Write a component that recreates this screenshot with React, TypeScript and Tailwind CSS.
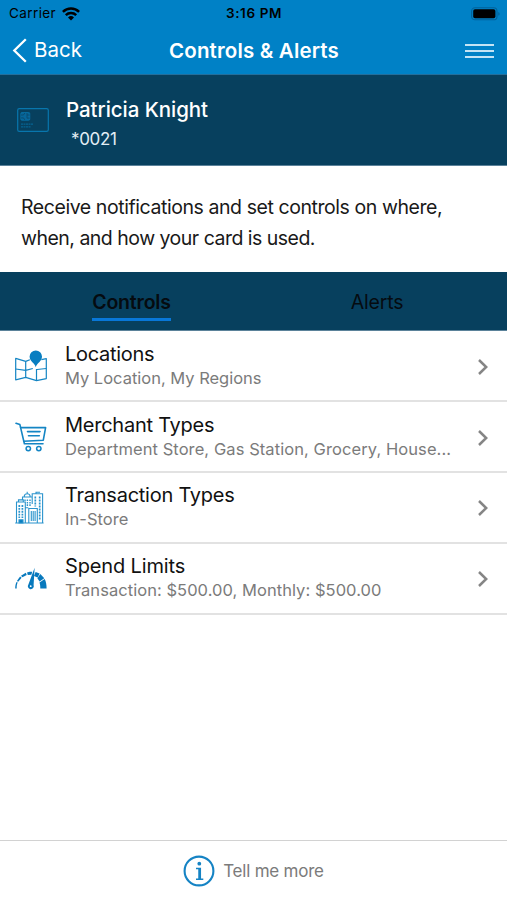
import type { ReactNode } from "react";

type ControlItem = {
  title: string;
  titleClass: string;
  detail: string;
  detailClass: string;
  icon: ReactNode;
};

function WifiIcon() {
  return (
    <svg width="18" height="14" viewBox="0 0 18 14" fill="none" stroke="#000" strokeWidth="2.5">
      <path d="M0.9 4.8a11.7 11.7 0 0 1 16.2 0" />
      <path d="M3.8 8.1a7.5 7.5 0 0 1 10.4 0" />
      <path d="M9 13.4 6 10.5a4.3 4.3 0 0 1 6 0z" fill="#000" stroke="none" />
    </svg>
  );
}

function BatteryIcon() {
  return (
    <svg width="30" height="14" viewBox="0 0 30 14">
      <rect x="0.6" y="0.8" width="25.4" height="12" rx="3.4" fill="none" stroke="#00629a" strokeWidth="1.1" />
      <rect x="2.2" y="2.3" width="22.2" height="9" rx="1.8" fill="#000" />
      <path d="M27.3 4.9v3.8c1.8-.6 1.8-3.2 0-3.8z" fill="#00629a" />
    </svg>
  );
}

function CardIcon() {
  return (
    <svg width="32" height="24" viewBox="0 0 32 24" fill="none" stroke="#0876ad">
      <rect x="0.7" y="0.7" width="30.6" height="22.6" rx="1.6" strokeWidth="1.2" />
      <rect x="3.8" y="4.5" width="9" height="7.8" rx="1.2" fill="#07669a" strokeWidth="0.7" />
      <path d="M4 7h2.5l1.3-2M4 9.9h2.5l1.3 2M12.6 7H10v3.1h2.6M10 7V5" stroke="#0b4668" strokeWidth="0.8" />
      <path d="M4 16.2h12M4 18.9h9.5" strokeWidth="1.2" strokeDasharray="2 .5" opacity=".65" />
    </svg>
  );
}

function MapIcon() {
  return (
    <svg width="34" height="34" viewBox="0 0 34 34" fill="none" stroke="#1485c4" strokeWidth="1.2" strokeLinejoin="round">
      <path d="m15.9 10.8-4.2 1.6-10-3v21.4l10-2.4 10.8 3.2 9.8-2V9.6l-4.9 1" />
      <path d="M11.7 12.6v15.8M22.5 20v11.6M1.7 20l10 1.3 7.1-1.8M23 20.5l9.3-1" />
      <path d="M21.8 18.3c-.9-4-6.2-5.8-6.2-10.7a6.2 6.2 0 0 1 12.4 0c0 4.9-5.3 6.7-6.2 10.7z" fill="#087ec1" stroke="none" />
    </svg>
  );
}

function CartIcon() {
  return (
    <svg width="34" height="34" viewBox="0 0 34 34" fill="none" stroke="#1485c4" strokeWidth="1.6" strokeLinecap="round" strokeLinejoin="round">
      <path d="M2 3.2 5.9 4.6l4.5 19.1H29" />
      <path d="M6.6 7.6h25l-2.3 12.6-19.6 1" />
      <path d="M13.5 11.6H26M14.5 15.8h10.8" />
      <circle cx="14.3" cy="28.6" r="2.2" strokeWidth="1.5" />
      <circle cx="24.8" cy="28.6" r="2.2" strokeWidth="1.5" />
    </svg>
  );
}

function BuildingsIcon() {
  return (
    <svg width="34" height="34" viewBox="0 0 34 34" fill="none" stroke="#2b94cd" strokeWidth="1.1">
      <path d="M2.5 32V11h8.8v21M4.5 10.8V8.9h4.8v1.9M8.5 8.6V6h9.8M10.2 5.8a3 3 0 0 1 6 0M13.2 2.8V.8M18.2 13V2.7h10.4V32M22 2.5V1.3h4M11.3 16.7h3M14.8 32V17.5h8.5V32M1.2 32h28.4" />
      <path d="M5.3 14v13M8.4 14v13" strokeWidth="1.7" strokeDasharray="1.9 1" />
      <path d="M11 8.5v1.5M13.4 8.5v7M16 8.5v7" strokeWidth="1.4" strokeDasharray="1.6 .8" />
      <path d="M21.3 5.5v10M25.7 5.5v24" strokeWidth="1.7" strokeDasharray="1.9 1.1" />
      <path d="M17.3 20v10M19.2 20v10M21.1 20v10" strokeWidth="1.1" />
      <path d="M5 32v-3.2h4V32z" fill="#087ec1" />
    </svg>
  );
}

function GaugeIcon() {
  return (
    <svg width="34" height="34" viewBox="0 0 34 34" fill="#0879bd">
      <path d="M1.2 26.4c0-2.5.4-4.4 1.3-6.4l1.2.6c-.8 1.8-1.1 3.6-1 5.8z" />
      <path d="m2.9 18.9 3.2-4.4 1.5 1.3-3.4 4z" />
      <path d="m7 13.7 4.8-2.9.9 2.2-4.3 2.3z" />
      <path d="M13 10.4c1.9-.6 3.6-.7 5.2-.7l-.8 3-3.6.2z" />
      <path d="m21.6 9.9 4 1.6-2 4.1-3.6-1.5z" />
      <path d="m26.3 12 4 4.2-4.7 3.2-2.2-3.1z" />
      <path d="M30.7 17c1.3 2.6 1.9 5.8 1.9 9.4h-6.3c0-2.4-.2-3.8-.8-5.8z" />
      <path d="m20.6 5.8-6.2 16.6a3 3 0 1 0 5.2.7z" />
      <circle cx="16.7" cy="24.2" r="0.9" fill="#fff" />
    </svg>
  );
}

function InfoIcon() {
  return (
    <svg width="32" height="32" viewBox="0 0 32 32" fill="none" stroke="#1583c4">
      <circle cx="16" cy="16" r="14.4" strokeWidth="2.1" />
      <circle cx="16.3" cy="8.7" r="1.9" fill="#1583c4" stroke="none" />
      <path d="M13 13.4h4.3v10.8M13 24.3h7.3" strokeWidth="1.5" />
      <path d="M16.6 13v11.5" strokeWidth="2.7" />
    </svg>
  );
}

const items: ControlItem[] = [
  {
    title: "Locations",
    titleClass: "tracking-[-0.28px]",
    detail: "My Location, My Regions",
    detailClass: "tracking-[-0.01px]",
    icon: <MapIcon />,
  },
  {
    title: "Merchant Types",
    titleClass: "tracking-[-0.25px]",
    detail: "Department Store, Gas Station, Grocery, House...",
    detailClass: "tracking-[0.08px]",
    icon: <CartIcon />,
  },
  {
    title: "Transaction Types",
    titleClass: "tracking-[-0.25px]",
    detail: "In-Store",
    detailClass: "tracking-[0.04px]",
    icon: <BuildingsIcon />,
  },
  {
    title: "Spend Limits",
    titleClass: "tracking-[-0.15px]",
    detail: "Transaction: $500.00, Monthly: $500.00",
    detailClass: "tracking-[0.05px]",
    icon: <GaugeIcon />,
  },
];

function ControlRow({ item }: { item: ControlItem }) {
  return (
    <button className="flex h-[70.8px] w-full items-center border-b-2 border-[#e2e2e2] pl-[14px] text-left">
      <span className="w-[51px] shrink-0 pt-px">{item.icon}</span>
      <span className="min-w-0 flex-1 whitespace-nowrap">
        <span className={`block text-[20px] leading-[25px] text-[#111] ${item.titleClass}`}>{item.title}</span>
        <span className={`block text-[16.5px] leading-[23px] text-[#7b7b7b] ${item.detailClass}`}>{item.detail}</span>
      </span>
      <svg className="mt-[2px] mr-[18.5px] shrink-0" width="12" height="18" viewBox="0 0 12 18" fill="none" stroke="#858585" strokeWidth="2.5">
        <path d="M2 2 9.2 9 2 16" />
      </svg>
    </button>
  );
}

export default function App() {
  return (
    <div className="flex h-[900px] w-[507px] flex-col overflow-hidden bg-white font-['Inter','Liberation_Sans',sans-serif]">
      {/* Status bar */}
      <div className="grid h-[27px] shrink-0 grid-cols-3 items-center bg-[#0081c6] text-[13.5px] leading-none text-black">
        <div className="flex items-center gap-[6px] pl-[9px]">
          <span className="tracking-[0.4px]">Carrier</span>
          <WifiIcon />
        </div>
        <div className="pt-px pl-px text-center font-semibold tracking-[0.6px]">3:16 PM</div>
        <div className="flex justify-end pr-[6px]">
          <BatteryIcon />
        </div>
      </div>

      {/* Navigation */}
      <header className="grid h-[48px] shrink-0 grid-cols-[1fr_auto_1fr] items-center border-b border-[#246e9b] bg-[#0081c6] text-white">
        <button className="flex items-center gap-[7px] pl-[12px] text-[20.5px]">
          <svg width="15" height="25" viewBox="0 0 15 25" fill="none" stroke="currentColor" strokeWidth="2.3">
            <path d="M13.8 1.2 2.3 12.5l11.5 11.3" />
          </svg>
          <span>Back</span>
        </button>
        <h1 className="pt-px pl-px text-[20.5px] font-semibold tracking-[0.16px]">Controls &amp; Alerts</h1>
        <button className="flex flex-col items-end gap-[4px] pr-[13px]" aria-label="Menu">
          <span className="h-[2px] w-[29px] bg-[#c4e4f5]" />
          <span className="h-[2px] w-[29px] bg-[#c4e4f5]" />
          <span className="h-[2px] w-[29px] bg-[#c4e4f5]" />
        </button>
      </header>

      {/* Card holder */}
      <section className="flex h-[91px] shrink-0 items-center border-b border-[#5b829a] bg-[#07405e] pl-[17px]">
        <CardIcon />
        <div className="pt-[10px] pl-[17px]">
          <div className="text-[20.5px] leading-[28px] font-medium tracking-[-0.05px] text-white">Patricia Knight</div>
          <div className="pl-[5px] text-[17px] leading-[30px] tracking-[-0.35px] text-[#e3eef5]">*0021</div>
        </div>
      </section>

      <p className="h-[106px] shrink-0 pt-[26px] pl-[21px] text-[19.5px] leading-[30.5px] tracking-[-0.43px] text-[#191919]">
        Receive notifications and set controls on where,
        <br />
        <span className="tracking-[-0.51px]">when, and how your card is used.</span>
      </p>

      {/* Tabs */}
      <nav className="flex h-[59px] shrink-0 border-b border-[#5b829a] bg-[#07405e] text-[19.5px] text-[#050b10]">
        <div className="flex w-[263px] justify-center pt-[15px]">
          <span className="h-[34px] border-b-[3px] border-[#0877d8] leading-[30px] font-semibold tracking-[-0.2px]">Controls</span>
        </div>
        <div className="flex w-[228px] justify-center pt-[15px]">
          <span className="leading-[30px] tracking-[-0.2px]">Alerts</span>
        </div>
      </nav>

      <main className="flex-1 pt-[0.4px]">
        {items.map((item) => (
          <ControlRow key={item.title} item={item} />
        ))}
      </main>

      <footer className="flex h-[60px] shrink-0 items-center justify-center gap-[8px] border-t border-[#d2d2d2] text-[17px] tracking-[-0.22px] text-[#7b7b7b]">
        <InfoIcon />
        <span className="pt-[2px]">Tell me more</span>
      </footer>
    </div>
  );
}
